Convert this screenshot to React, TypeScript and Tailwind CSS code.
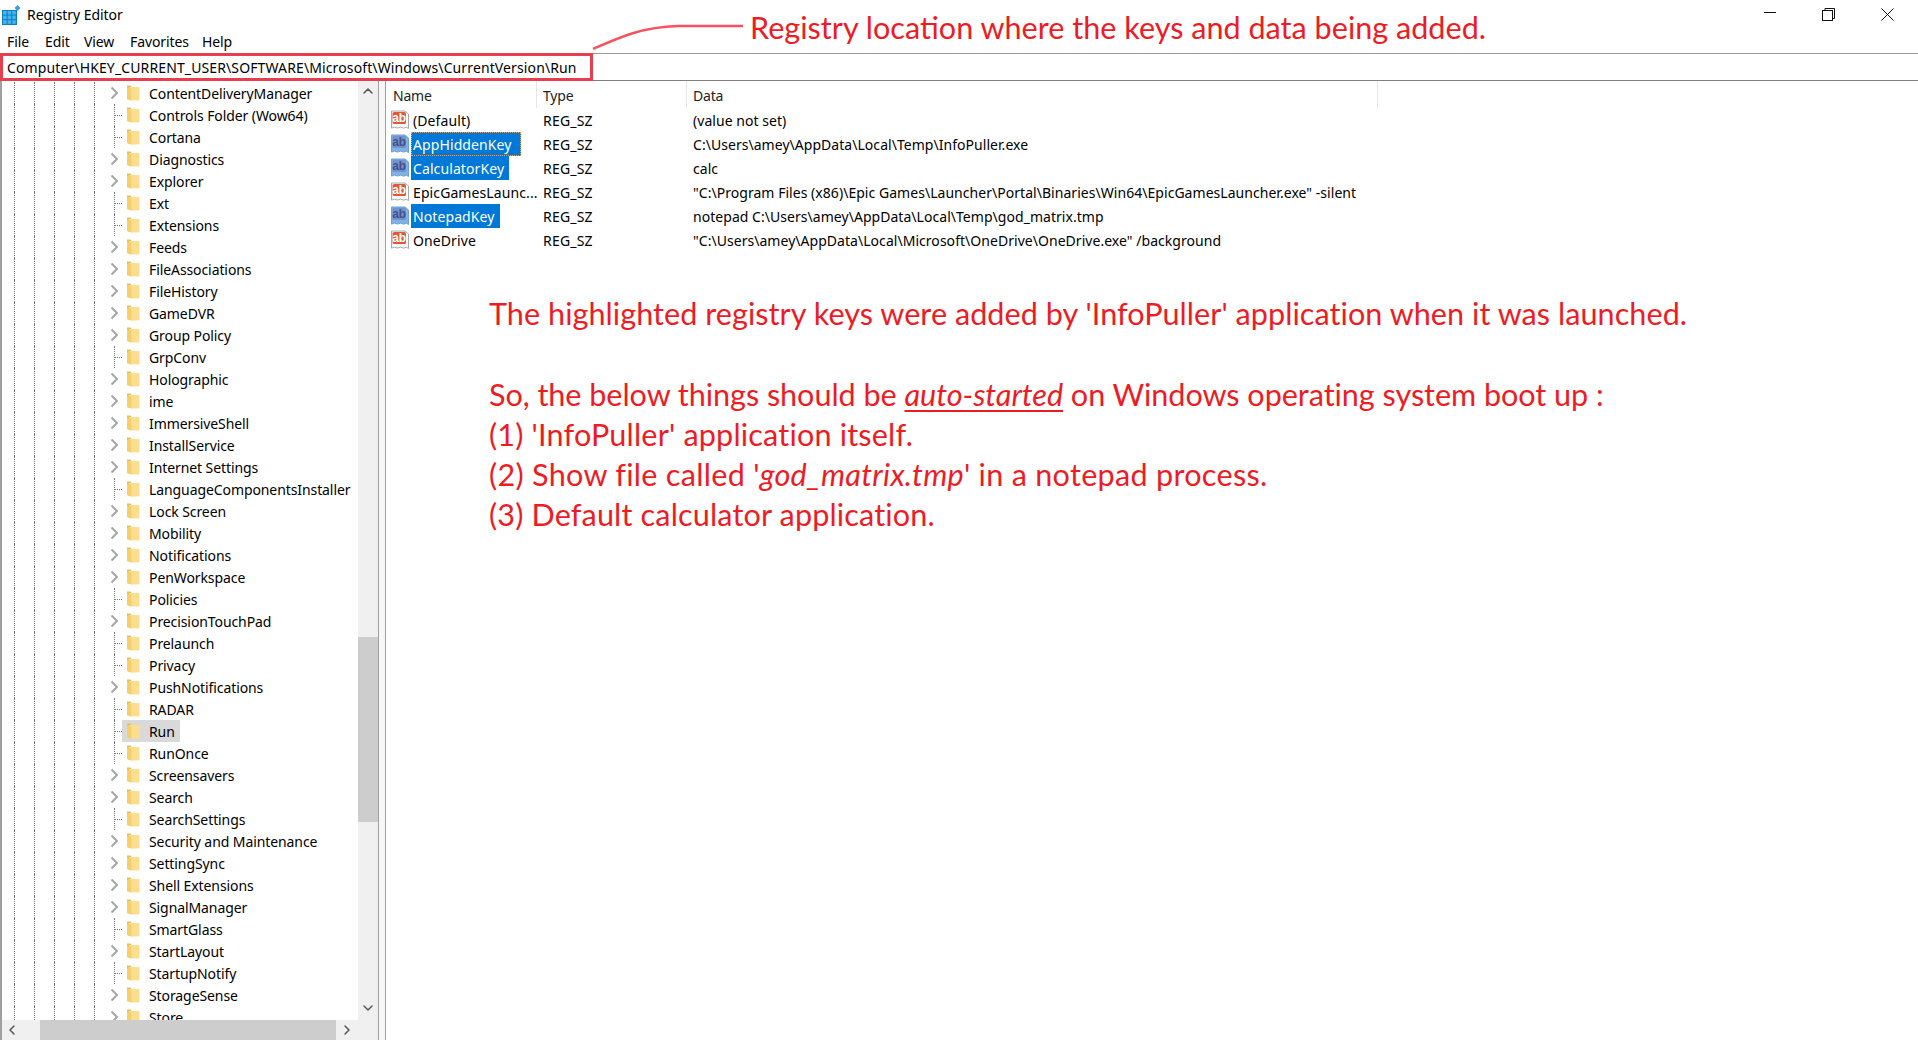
import { ChevronDown, ChevronLeft, ChevronRight, ChevronUp } from "lucide-react";

const uiFont = "font-['Noto_Sans',sans-serif]";

const treeItems: [string, boolean][] = [
  ["ContentDeliveryManager", true],
  ["Controls Folder (Wow64)", false],
  ["Cortana", false],
  ["Diagnostics", true],
  ["Explorer", true],
  ["Ext", false],
  ["Extensions", false],
  ["Feeds", true],
  ["FileAssociations", true],
  ["FileHistory", true],
  ["GameDVR", true],
  ["Group Policy", true],
  ["GrpConv", false],
  ["Holographic", true],
  ["ime", true],
  ["ImmersiveShell", true],
  ["InstallService", true],
  ["Internet Settings", true],
  ["LanguageComponentsInstaller", false],
  ["Lock Screen", true],
  ["Mobility", true],
  ["Notifications", true],
  ["PenWorkspace", true],
  ["Policies", false],
  ["PrecisionTouchPad", true],
  ["Prelaunch", false],
  ["Privacy", false],
  ["PushNotifications", true],
  ["RADAR", false],
  ["Run", false],
  ["RunOnce", false],
  ["Screensavers", true],
  ["Search", true],
  ["SearchSettings", false],
  ["Security and Maintenance", true],
  ["SettingSync", true],
  ["Shell Extensions", true],
  ["SignalManager", true],
  ["SmartGlass", false],
  ["StartLayout", true],
  ["StartupNotify", false],
  ["StorageSense", true],
  ["Store", true],
];

const values = [
  { name: "(Default)", data: "(value not set)" },
  { name: "AppHiddenKey", data: "C:\\Users\\amey\\AppData\\Local\\Temp\\InfoPuller.exe", selected: true, focused: true },
  { name: "CalculatorKey", data: "calc", selected: true },
  { name: "EpicGamesLaunc...", data: '"C:\\Program Files (x86)\\Epic Games\\Launcher\\Portal\\Binaries\\Win64\\EpicGamesLauncher.exe" -silent' },
  { name: "NotepadKey", data: "notepad C:\\Users\\amey\\AppData\\Local\\Temp\\god_matrix.tmp", selected: true },
  { name: "OneDrive", data: '"C:\\Users\\amey\\AppData\\Local\\Microsoft\\OneDrive\\OneDrive.exe" /background' },
];

function RegeditIcon() {
  return (
    <svg width="20" height="22" viewBox="0 0 20 22" className="shrink-0">
      <rect x="1" y="6" width="15" height="15" fill="#0a7fc4" />
      <g fill="#45b4ec">
        <rect x="2" y="7" width="3.6" height="3.6" />
        <rect x="6.6" y="7" width="3.6" height="3.6" />
        <rect x="11.2" y="7" width="3.6" height="3.6" />
        <rect x="2" y="11.6" width="3.6" height="3.6" />
        <rect x="6.6" y="11.6" width="3.6" height="3.6" />
        <rect x="11.2" y="11.6" width="3.6" height="3.6" />
        <rect x="2" y="16.2" width="3.6" height="3.6" />
        <rect x="6.6" y="16.2" width="3.6" height="3.6" />
        <rect x="11.2" y="16.2" width="3.6" height="3.6" />
      </g>
      <path d="M16.5 1l3 3-3 3-3-3z" fill="#3d9fd8" />
    </svg>
  );
}

function Folder() {
  return (
    <svg width="14" height="18" viewBox="0 0 14 18" className="shrink-0">
      <path d="M1 1.5h3.5l1 1.5V16.5L1 15z" fill="#e8bd5a" />
      <path d="M3 3h10.5v13.5H5.5L3 15z" fill="#fbdf8e" />
      <path d="M1 3.5l4.5 1v12L1 15z" fill="#f6cf6c" />
    </svg>
  );
}

function TreeChevron() {
  return (
    <svg width="9" height="14" viewBox="0 0 9 14" className="-ml-[4px] shrink-0 bg-white" fill="none">
      <path d="M1.5 1.5L7 7l-5.5 5.5" stroke="#a6a6a6" strokeWidth="2" />
    </svg>
  );
}

function StringIcon({ selected }: { selected?: boolean }) {
  return (
    <svg width="18" height="20" viewBox="0 0 18 20" className="shrink-0">
      <path
        d="M0.5 1h13.5l3.5 3v14.5l-2-1.2-3 .8-3-1-3 1-3-1-3 1z"
        fill={selected ? "#7fb2e5" : "#fbfbfb"}
        stroke={selected ? "#6f9fd0" : "#a8a8a8"}
      />
      <rect x="1.5" y="2" width="13.5" height="12" rx="1.5" fill={selected ? "#6d94cc" : "#e2583a"} />
      <text
        x="8.2"
        y="12"
        fontSize="12"
        fontWeight="700"
        textAnchor="middle"
        fill={selected ? "#4a4f8a" : "#ffffff"}
        fontFamily="'Liberation Sans', sans-serif"
      >
        ab
      </text>
    </svg>
  );
}

function TreeRow({ name, expandable }: { name: string; expandable: boolean }) {
  const active = name === "Run";
  return (
    <div className="flex h-[22px] shrink-0 items-center">
      <div className="flex h-full pl-[14px]">
        {[0, 1, 2, 3, 4].map((i) => (
          <div key={i} className="h-full w-5 border-l border-dotted border-[#777]" />
        ))}
      </div>
      <div className="flex h-full w-[12px] shrink-0 items-center">
        {expandable ? (
          <TreeChevron />
        ) : (
          <>
            <div className="h-full w-px border-l border-dotted border-[#777]" />
            <div className="w-[7px] border-t border-dotted border-[#777]" />
          </>
        )}
      </div>
      <div
        className={`flex h-full items-center gap-[9px] ${active ? "-ml-[4px] bg-[#d9d9d9] pl-[4px] pr-[5px]" : ""}`}
      >
        <Folder />
        <span className="whitespace-nowrap text-[14px] tracking-[-0.09px] text-black">{name}</span>
      </div>
    </div>
  );
}

export default function App() {
  return (
    <div className={`relative flex h-[1040px] w-[1918px] flex-col overflow-hidden bg-white text-black ${uiFont}`}>
      {/* title bar */}
      <div className="flex h-[30px] shrink-0 items-center pl-[1px]">
        <RegeditIcon />
        <span className="ml-[6px] -translate-y-px text-[14px] tracking-[-0.05px]">Registry Editor</span>
        <div className="ml-auto flex items-center">
          <svg width="12" height="2" viewBox="0 0 12 2" className="mr-[46px] -translate-y-[2px]">
            <rect width="12" height="1" fill="#111" />
          </svg>
          <svg width="13" height="13" viewBox="0 0 13 13" className="mr-[46px] -translate-y-[1px]" fill="none" stroke="#111">
            <rect x="0.5" y="2.5" width="10" height="10" />
            <path d="M3 2.5V0.5h9.5v10h-2" />
          </svg>
          <svg width="13" height="13" viewBox="0 0 13 13" className="mr-[24px] -translate-y-[1px]" fill="none" stroke="#111">
            <path d="M0.5 0.5l12 12M12.5 0.5l-12 12" />
          </svg>
        </div>
      </div>

      {/* menu */}
      <div className="flex h-[23px] shrink-0 items-center pl-[7px] text-[14px] tracking-[-0.1px]">
        <span className="w-[38px]">File</span>
        <span className="w-[39px]">Edit</span>
        <span className="w-[46px]">View</span>
        <span className="w-[72px]">Favorites</span>
        <span>Help</span>
      </div>

      {/* address bar */}
      <div className="flex h-[28px] shrink-0 border-y border-t-[#9a9a9a] border-b-[#808080]">
        <div className="-my-px flex w-[593px] items-center border-[3px] border-[#e63e4f] pl-[4px] text-[14px] tracking-[0.12px] whitespace-nowrap">
          Computer\HKEY_CURRENT_USER\SOFTWARE\Microsoft\Windows\CurrentVersion\Run
        </div>
      </div>

      <div className="flex min-h-0 flex-1">
        {/* tree pane */}
        <div className="flex w-[378px] shrink-0 flex-col border-l-2 border-[#a0a0a0]">
          <div className="flex min-h-0 flex-1">
            <div className="-ml-[2px] flex min-w-0 flex-1 flex-col overflow-hidden pt-px">
              {treeItems.map(([name, expandable]) => (
                <TreeRow key={name} name={name} expandable={expandable} />
              ))}
            </div>
            <div className="flex w-[20px] shrink-0 flex-col bg-[#f0f0f0]">
              <div className="flex h-[20px] shrink-0 items-center justify-center">
                <ChevronUp className="h-4 w-4 text-[#555]" strokeWidth={2.2} />
              </div>
              <div className="h-[536px] shrink-0" />
              <div className="h-[185px] shrink-0 bg-[#cdcdcd]" />
              <div className="mt-auto flex h-[22px] shrink-0 items-center justify-center pb-[2px]">
                <ChevronDown className="h-4 w-4 text-[#555]" strokeWidth={2.2} />
              </div>
            </div>
          </div>
          <div className="flex h-[20px] shrink-0 items-center bg-[#f0f0f0]">
            <div className="flex w-[38px] items-center pl-[2px]">
              <ChevronLeft className="h-4 w-4 text-[#555]" strokeWidth={2.2} />
            </div>
            <div className="h-full w-[296px] bg-[#cdcdcd]" />
            <div className="flex w-[22px] items-center justify-center">
              <ChevronRight className="h-4 w-4 text-[#555]" strokeWidth={2.2} />
            </div>
          </div>
        </div>

        {/* splitter */}
        <div className="w-[8px] shrink-0 border-x border-[#a0a0a0] bg-[#f7f7f7]" />

        {/* list pane */}
        <div className="flex min-w-0 flex-1 flex-col">
          <div className="flex h-[27px] shrink-0 items-center text-[14px] tracking-[-0.2px] text-[#222]">
            <div className="flex h-full w-[151px] items-center border-r border-[#e5e5e5] pl-[7px] pt-[2px]">Name</div>
            <div className="flex h-full w-[150px] items-center border-r border-[#e5e5e5] pl-[6px] pt-[2px]">Type</div>
            <div className="flex h-full w-[691px] items-center border-r border-[#e5e5e5] pl-[6px] pt-[2px]">Data</div>
          </div>
          {values.map((v) => (
            <div key={v.name} className="flex h-[24px] shrink-0 items-center text-[14px] tracking-[0.04px]">
              <div className="flex h-full w-[151px] shrink-0 items-center pl-[5px]">
                <StringIcon selected={v.selected} />
                <span
                  className={`ml-[2px] flex h-full items-center pl-[2px] tracking-[0.1px] whitespace-nowrap ${
                    v.selected ? "bg-[#0078d7] text-white" : ""
                  } ${v.focused ? "pr-[9px] outline-1 -outline-offset-1 outline-dotted outline-[#f0a050]" : "pr-[5px]"}`}
                >
                  {v.name}
                </span>
              </div>
              <div className="w-[150px] shrink-0 pl-[6px] tracking-[0.2px]">REG_SZ</div>
              <div className="whitespace-nowrap pl-[6px]">{v.data}</div>
            </div>
          ))}

          <div className="mt-[42px] flex flex-col pl-[103px] font-['Lato',sans-serif] text-[30.6px] leading-[40px] text-[#ed1c24]">
            <p className="tracking-[0.04px]">
              The highlighted registry keys were added by 'InfoPuller' application when it was launched.
            </p>
            <p className="mt-[41px] tracking-[-0.05px]">
              So, the below things should be{" "}
              <em className="underline decoration-2 underline-offset-4">auto-started</em> on Windows operating system
              boot up :
            </p>
            <p className="tracking-[0.17px]">(1) 'InfoPuller' application itself.</p>
            <p className="tracking-[0.28px]">
              (2) Show file called '<em>god_matrix.tmp</em>' in a notepad process.
            </p>
            <p className="tracking-[0.14px]">(3) Default calculator application.</p>
          </div>
        </div>
      </div>

      {/* annotation over the title bar */}
      <svg width="170" height="50" viewBox="0 0 170 50" className="absolute top-[10px] left-[590px]" fill="none">
        <path d="M3 39C30 27 52 17 88 16H153" stroke="#f9525f" strokeWidth="2.5" />
      </svg>
      <div className="absolute top-[8px] left-[750px] font-['Lato',sans-serif] text-[30.6px] leading-[40px] whitespace-nowrap text-[#ed1c24]">
        Registry location where the keys and data being added.
      </div>
    </div>
  );
}
